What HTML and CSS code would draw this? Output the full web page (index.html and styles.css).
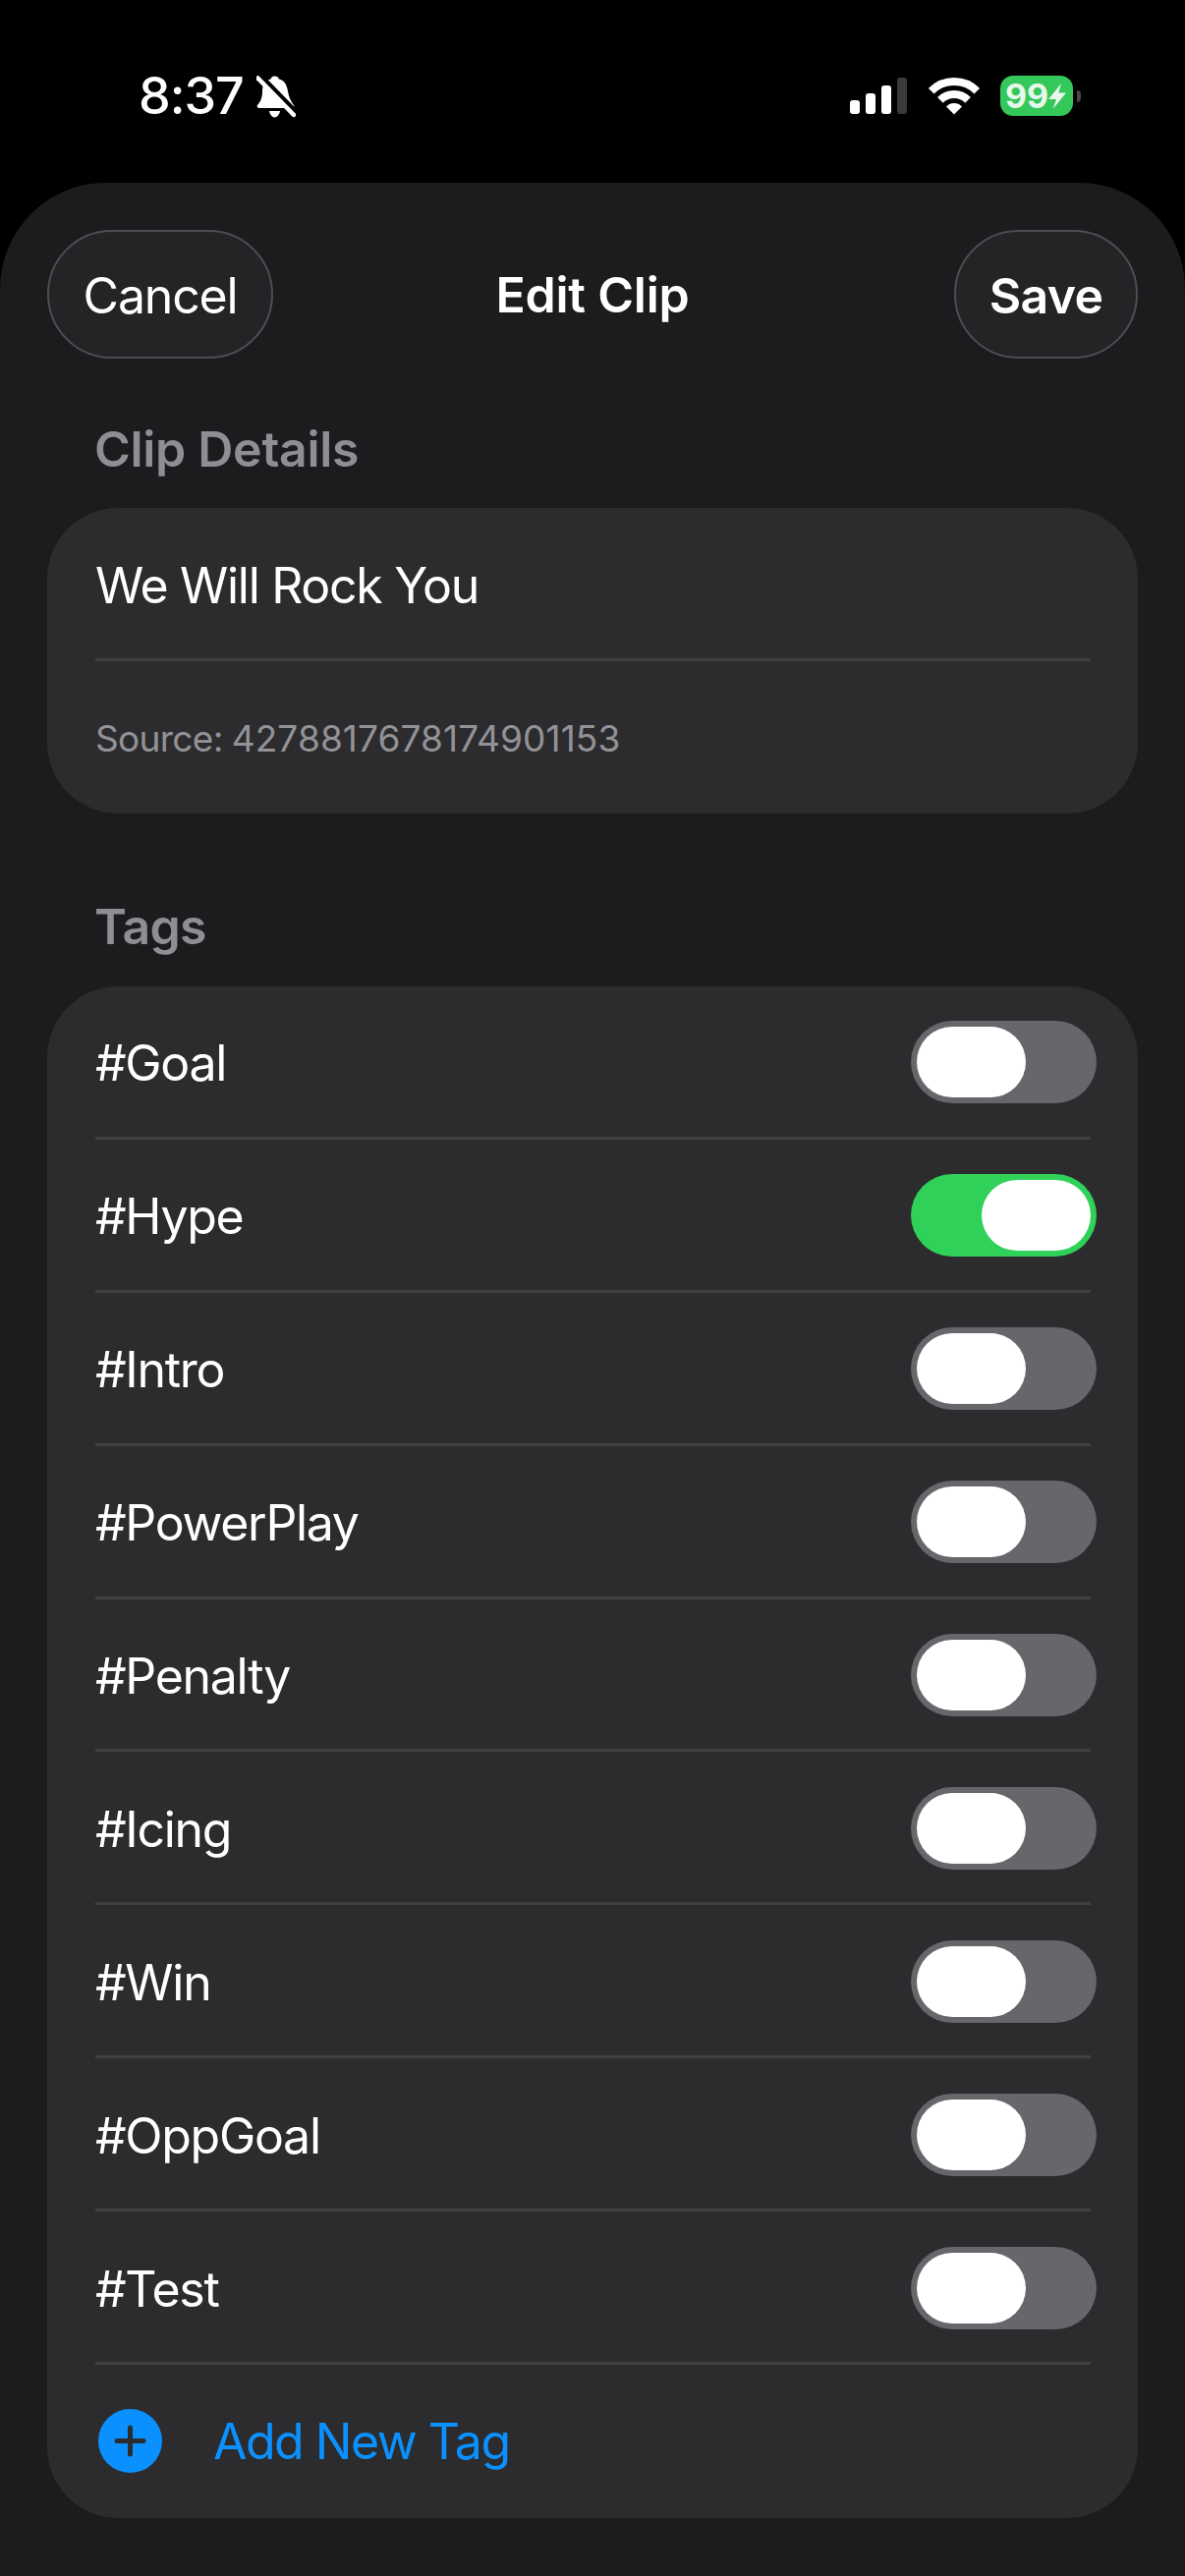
FILE: index.html
```html
<!DOCTYPE html>
<html lang="en">

<head>
    <meta charset="UTF-8">
    <meta name="viewport" content="width=device-width, initial-scale=1.0">
    <title>Edit Clip</title>
    <link rel="stylesheet" href="styles.css">
</head>

<body>
    <div class="status-bar">
        <div class="status-left">
            <span class="time">8:37</span>
            <svg class="bell" width="40" height="43" viewBox="0 0 40 43">
                <path fill="#fff" d="M18.5 .5c-2 0-3.5 1-4 3C8 5 6 10 6 16c0 6-1.5 10-5 14-1 1.5 0 3 2 3h33c2 0 3-1.5 2-3-3-4-5-8-6-14-1-6-3-11-9-12.500C22.500 1.500 20.500 .5 18.500 .5z" />
                <path fill="#fff" d="M13 36h11c-.5 3.500-3 6.500-5.500 6.500S13.500 39.500 13 36z" />
                <path stroke="#000" stroke-width="6.500" d="M3.500 .5L40 38" />
                <path stroke="#fff" stroke-width="4.500" stroke-linecap="round" d="M1.500 2.500L38 40" />
            </svg>
        </div>
        <div class="status-right">
            <div class="signal">
                <span class="bar bar1"></span>
                <span class="bar bar2"></span>
                <span class="bar bar3"></span>
                <span class="bar bar4"></span>
            </div>
            <svg class="wifi" width="52" height="38" viewBox="0 0 52 38">
                <path fill="none" stroke="#fff" stroke-width="8" d="M2.7 13.700A33 33 0 0 1 49.300 13.700" />
                <path fill="none" stroke="#fff" stroke-width="8" d="M11.900 22.900A20 20 0 0 1 40.100 22.900" />
                <path fill="#fff" d="M26 37.500L18 29.500A11 11 0 0 1 34 29.500z" />
            </svg>
            <div class="battery">
                <span class="battery-level">99</span>
                <svg class="bolt" width="19" height="26" viewBox="0 0 19 26">
                    <path fill="#e8f8ec" d="M13 0L0 16H8L4.5 26 18 9.500H10.500z" />
                </svg>
            </div>
            <span class="battery-nub"></span>
        </div>
    </div>

    <div class="sheet">
        <header class="nav">
            <button class="nav-btn cancel">Cancel</button>
            <h1 class="nav-title">Edit Clip</h1>
            <button class="nav-btn save">Save</button>
        </header>

        <h2 class="section-title first">Clip Details</h2>
        <section class="card">
            <div class="row name-row"><span class="label">We Will Rock You</span></div>
            <div class="row source-row"><span class="source-label">Source:</span>&nbsp;<span class="source-id">4278817678174901153</span></div>
        </section>

        <h2 class="section-title tags-title">Tags</h2>
        <section class="card">
            <div class="row tag-row"><span class="label">#Goal</span><span class="toggle"><span class="thumb"></span></span></div>
            <div class="row tag-row"><span class="label">#Hype</span><span class="toggle on"><span class="thumb"></span></span></div>
            <div class="row tag-row"><span class="label">#Intro</span><span class="toggle"><span class="thumb"></span></span></div>
            <div class="row tag-row"><span class="label">#PowerPlay</span><span class="toggle"><span class="thumb"></span></span></div>
            <div class="row tag-row"><span class="label">#Penalty</span><span class="toggle"><span class="thumb"></span></span></div>
            <div class="row tag-row"><span class="label">#Icing</span><span class="toggle"><span class="thumb"></span></span></div>
            <div class="row tag-row"><span class="label">#Win</span><span class="toggle"><span class="thumb"></span></span></div>
            <div class="row tag-row"><span class="label">#OppGoal</span><span class="toggle"><span class="thumb"></span></span></div>
            <div class="row tag-row"><span class="label">#Test</span><span class="toggle"><span class="thumb"></span></span></div>
            <div class="row add-row">
                <svg class="add-icon" width="65" height="65" viewBox="0 0 65 65">
                    <circle cx="32.5" cy="32.5" r="32.5" fill="#0a91ff" />
                    <path stroke="#2c2c2e" stroke-width="5" stroke-linecap="round" d="M32.5 19V46M19 32.5H46" />
                </svg>
                <span class="add-text">Add New Tag</span>
            </div>
        </section>
    </div>
</body>

</html>
```

FILE: styles.css
```css
* {
    margin: 0;
    padding: 0;
    box-sizing: border-box;
}

body {
    width: 1206px;
    height: 2622px;
    background-color: #000;
    color: #fff;
    font-family: Inter, "Liberation Sans", sans-serif;
    overflow: hidden;
}

.status-bar {
    height: 186px;
    padding: 0 106px 0 141px;
    display: flex;
    justify-content: space-between;
    align-items: flex-start;
}

.status-left {
    margin-top: 71px;
    height: 54px;
    display: flex;
    align-items: center;
}

.time {
    font-size: 52px;
    font-weight: 500;
    line-height: 54px;
    letter-spacing: -1px;
}

.bell {
    margin-left: 13px;
}

.status-right {
    margin-top: 77px;
    height: 41px;
    display: flex;
    align-items: center;
}

.signal {
    display: flex;
    align-items: flex-end;
    gap: 6px;
    height: 37px;
}

.bar {
    width: 10px;
    background-color: #fff;
    border-radius: 3px;
}

.bar1 {
    height: 14px;
}

.bar2 {
    height: 21px;
}

.bar3 {
    height: 29px;
}

.bar4 {
    height: 37px;
    background-color: #3a3a3c;
}

.wifi {
    margin-left: 22px;
}

.battery {
    margin-left: 21px;
    width: 74px;
    height: 41px;
    padding-left: 5px;
    border-radius: 13px;
    background-color: #34c759;
    display: flex;
    align-items: center;
}

.battery-level {
    font-size: 34px;
    font-weight: 700;
    color: #e8f8ec;
    line-height: 41px;
}

.battery-nub {
    margin-left: 4px;
    width: 4px;
    height: 12px;
    background-color: #48484a;
    border-radius: 0 4px 4px 0;
}

.sheet {
    height: 2436px;
    padding: 48px 48px 0;
    background-color: #1c1c1e;
    border-radius: 108px 108px 0 0;
}

.nav {
    display: grid;
    grid-template-columns: 1fr auto 1fr;
    align-items: center;
}

.nav-btn {
    height: 131px;
    padding-top: 2px;
    border: 2px solid #4e4e52;
    border-radius: 66px;
    background-color: #242426;
    color: #fff;
    font-family: inherit;
    font-size: 50px;
    letter-spacing: -1.2px;
}

.cancel {
    width: 230px;
    justify-self: start;
}

.save {
    width: 187px;
    justify-self: end;
    font-weight: 600;
    letter-spacing: -0.7px;
}

.nav-title {
    font-size: 50px;
    font-weight: 600;
    letter-spacing: -0.2px;
}

.section-title {
    margin-top: 85px;
    margin-bottom: 31px;
    padding-left: 48px;
    height: 60px;
    line-height: 60px;
    font-size: 50px;
    font-weight: 600;
    letter-spacing: -0.3px;
    color: #8e8e93;
}

.section-title.first {
    margin-top: 62px;
    margin-bottom: 30px;
}

.tags-title {
    letter-spacing: -0.8px;
}

.card {
    padding: 0 48px 0 49px;
    background-color: #2c2c2e;
    border-radius: 72px;
}

.row {
    display: flex;
    align-items: center;
    font-size: 50px;
    letter-spacing: -1.3px;
    border-bottom: 3px solid #404042;
}

.label {
    padding-top: 4px;
}

.name-row {
    height: 156px;
}

.source-row {
    height: 155px;
    padding-top: 2px;
    font-size: 37px;
    color: #929297;
    border-bottom: none;
}

.source-label {
    letter-spacing: -0.7px;
}

.source-id {
    letter-spacing: 0.1px;
}

.tag-row {
    height: 155.9px;
    justify-content: space-between;
}

.add-row {
    height: 155.9px;
    border-bottom: none;
}

.toggle {
    width: 189px;
    height: 84px;
    margin-top: 2px;
    margin-right: -6px;
    padding: 6px;
    border-radius: 42px;
    background-color: #66666b;
    display: flex;
}

.toggle.on {
    background-color: #30d158;
    justify-content: flex-end;
}

.thumb {
    width: 111px;
    height: 72px;
    border-radius: 36px;
    background-color: #fff;
}

.add-icon {
    margin-left: 3px;
}

.add-text {
    margin-left: 52px;
    letter-spacing: -1.5px;
    color: #0a91ff;
}
```
